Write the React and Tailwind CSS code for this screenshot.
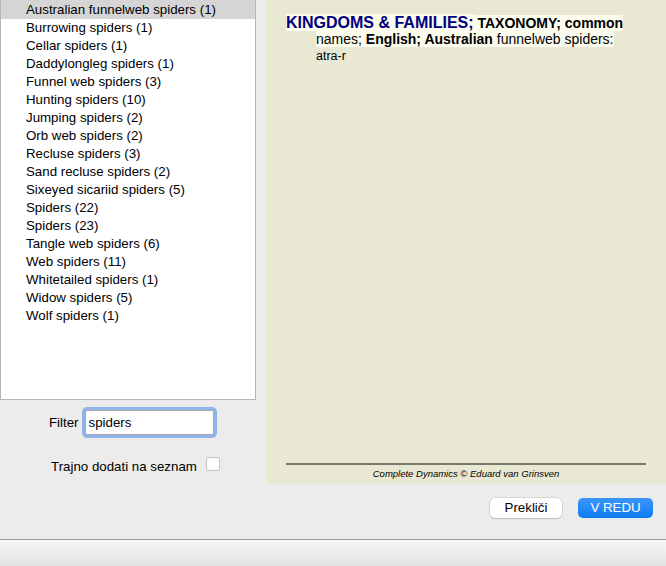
import { useState } from 'react';

const items = [
  'Australian funnelweb spiders (1)',
  'Burrowing spiders (1)',
  'Cellar spiders (1)',
  'Daddylongleg spiders (1)',
  'Funnel web spiders (3)',
  'Hunting spiders (10)',
  'Jumping spiders (2)',
  'Orb web spiders (2)',
  'Recluse spiders (3)',
  'Sand recluse spiders (2)',
  'Sixeyed sicariid spiders (5)',
  'Spiders (22)',
  'Spiders (23)',
  'Tangle web spiders (6)',
  'Web spiders (11)',
  'Whitetailed spiders (1)',
  'Widow spiders (5)',
  'Wolf spiders (1)',
];

export default function App() {
  const [selected, setSelected] = useState(0);
  const [filter, setFilter] = useState('spiders');

  return (
    <div className="w-[666px] h-[566px] bg-[#ececec] flex flex-col overflow-hidden font-['Liberation_Sans',Arial,sans-serif] text-[13.3px] text-black">
      <div className="flex h-[484px]">
        {/* left column */}
        <div className="w-[256px] flex flex-col">
          <div className="h-[400px] bg-white border border-[#b5b5b5] border-t-0">
            {items.map((item, i) => (
              <div
                key={i}
                onClick={() => setSelected(i)}
                className={`h-[18px] leading-[20px] pl-[25px] first:h-[19px] first:-mb-[1px] ${selected === i ? 'bg-[#d5d5d5]' : ''}`}
              >
                {item}
              </div>
            ))}
          </div>
          <div className="flex items-center mt-[10px] pl-[49px] gap-[6px]">
            <span>Filter</span>
            <input
              value={filter}
              onChange={(e) => setFilter(e.target.value)}
              className="w-[129px] h-[25px] px-[3px] bg-white border border-[#aaa] outline-none ring-[3px] ring-[#8fb4ec] rounded-[2px] text-[13.3px]"
            />
          </div>
          <div className="flex items-center mt-[22px] pl-[51px] gap-[9px]">
            <span>Trajno dodati na seznam</span>
            <span className="w-[14px] h-[14px] bg-white border border-[#c4c4c4] rounded-[3px] -mt-[6px]" />
          </div>
        </div>

        {/* right panel */}
        <div className="ml-[10px] flex-1 bg-[#e9e9d3] flex flex-col px-[20px]">
          <div className="pt-[14px] pl-[30px] -indent-[30px] text-[14px] leading-[16px] pr-[1px]">
            <span className="bg-[#fbfbee] text-[#000080] font-bold text-[16px] leading-[17px]">KINGDOMS &amp; FAMILIES;</span>
            <span className="bg-[#fbfbee]"> <b>TAXONOMY; common</b> names; <b>English; Australian</b> funnelweb spiders:</span>{' '}
            <span className="text-[12.5px] whitespace-nowrap">atra-r</span>
          </div>
          <div className="mt-auto mb-[4px]">
            <div className="h-[2px] bg-[#78786c]" />
            <div className="text-center italic text-[9.5px] mt-[3px] leading-[12px]">Complete Dynamics © Eduard van Grinsven</div>
          </div>
        </div>
      </div>

      {/* buttons */}
      <div className="flex justify-end gap-[16px] pr-[13px] mt-[14px]">
        <button className="w-[72px] h-[20px] bg-white rounded-[5px] shadow-[0_0_0_0.5px_#c0c0c0,0_1px_1px_rgba(0,0,0,0.2)] text-[13.3px] leading-[20px]">
          Prekliči
        </button>
        <button className="w-[75px] h-[20px] bg-gradient-to-b from-[#3a97fb] to-[#0a7bf5] text-white rounded-[5px] text-[13.3px] leading-[20px]">
          V REDU
        </button>
      </div>

      <div className="mt-auto h-[27px] border-t border-[#9a9a9a] bg-gradient-to-b from-[#f7f7f7] to-[#e2e2e2]" />
    </div>
  );
}
